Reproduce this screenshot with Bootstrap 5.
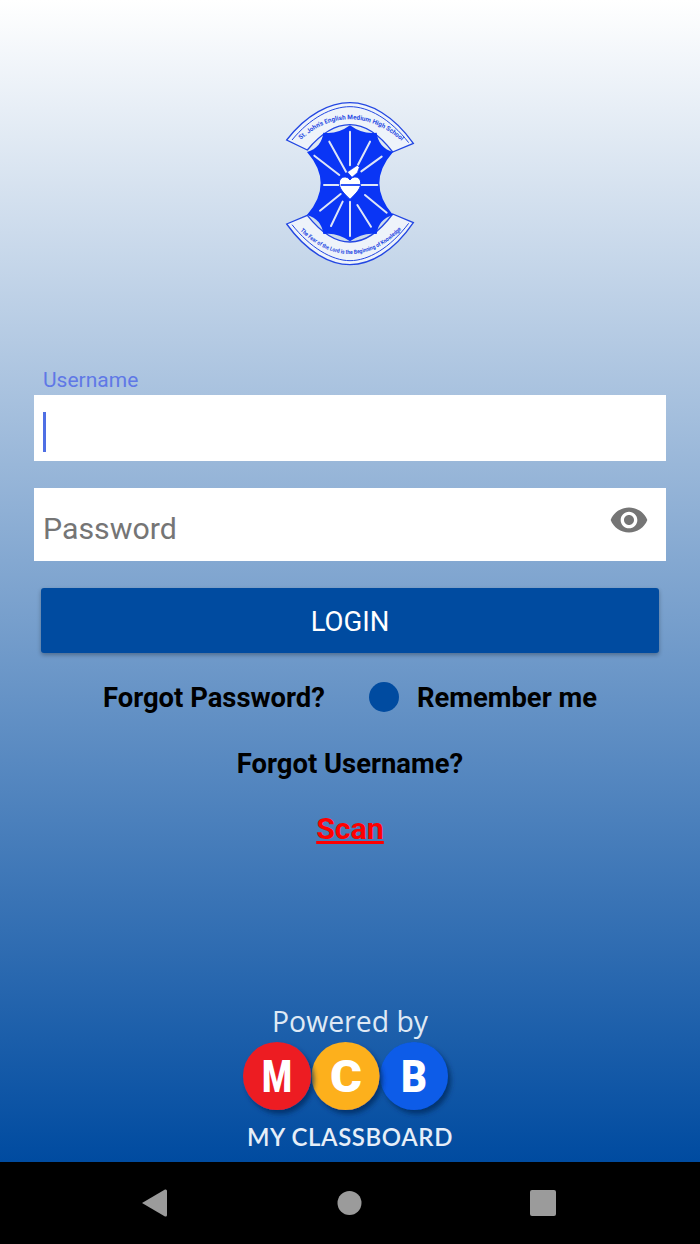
<!DOCTYPE html>
<html lang="en">
<head>
  <meta charset="UTF-8" />
  <title>Login</title>
  <meta name="viewport" content="width=device-width, initial-scale=1">
  <link href="https://cdn.jsdelivr.net/npm/bootstrap@5.3.0/dist/css/bootstrap.min.css" rel="stylesheet">
  <style>
    html, body { height: 100%; }
    body { font-family: Roboto, "Liberation Sans", sans-serif; background: #000; overflow: hidden; }
    .screen { height: 1162px; background: linear-gradient(#fff, #004ba0); }
    .crest-wrap { padding-top: 90px; height: 275px; }
    .crest-text { font-family: Roboto, "Liberation Sans", sans-serif; font-weight: 700; fill: #2347e2; }
    .form-wrap { margin-top: 92px; padding: 0 34px; }
    .user-label { color: #5f78e6; font-size: 21px; line-height: 26px; height: 28px; padding-left: 9px; margin: 0; }
    .field { position: relative; }
    .field .form-control { border: 0; border-radius: 0; font-size: 30.3px; color: #757575; padding: 0 60px 0 9px; box-shadow: none; }
    .field .form-control::placeholder { color: #757575; opacity: 1; }
    .user-input { height: 66px; }
    .pass-field { margin-top: 27px; }
    .pass-input { height: 73px; padding-top: 8px !important; }
    .fake-caret { position: absolute; left: 9px; top: 17px; width: 3px; height: 40px; background: #4f6fe4; }
    .eye-btn { position: absolute; right: 17px; top: 12px; width: 40px; height: 40px; }
    .login-btn { display: block; margin: 27px 7px 0; width: calc(100% - 14px); height: 65px; padding: 3px 0 0; background: #004ba0; border: 0; border-radius: 3px;
      font-size: 27.5px; color: #fff; box-shadow: 0 2px 4px rgba(0,0,0,.3); }
    .login-btn:hover { background: #004ba0; }
    .link-rows { font-size: 27.4px; font-weight: 700; color: #000; line-height: 30px; }
    .row-one { margin-top: 30px; gap: 44px; }
    .remember { gap: 18px; }
    .radio-dot { width: 30px; height: 30px; background: #004ba0; margin-top: -2px; }
    .row-two { margin-top: 36px; }
    .row-three { margin-top: 35px; color: #f00; font-size: 30.3px; font-weight: 700; text-decoration: underline; text-underline-offset: 2px; }
    .powered { padding-bottom: 2px; }
    .sys-nav { height: 82px; background: #000; }
    .sys-nav svg { display: block; }
  </style>
</head>
<body>

  <div class="screen d-flex flex-column">
    <!-- school crest -->
    <div class="crest-wrap d-flex justify-content-center">
      <svg width="160" height="185" viewBox="0 0 480 555">
        <defs>
          <path id="arcTop" d="M90 152 C140 105 190 88 240 88 C290 88 345 108 398 156" />
          <path id="arcBot" d="M88 420 C140 470 190 492 240 492 C290 492 345 470 398 414" />
        </defs>
        <g fill="#eef3fa" stroke="#2347e2" stroke-width="4">
          <path d="M50 150 C110 72 180 38 240 38 C300 38 370 76 430 160 L368 186 C325 130 280 104 240 104 C200 104 155 128 112 180 Z" />
          <path d="M50 402 L112 376 C155 430 200 456 240 456 C280 456 325 430 368 372 L430 398 C370 486 300 524 240 524 C180 524 110 486 50 402 Z" />
        </g>
        <g fill="none" stroke="#2347e2" stroke-width="3">
          <path d="M66 150 C120 84 185 50 240 50 C295 50 360 86 416 158" />
          <path d="M66 404 C120 472 185 512 240 512 C295 512 360 474 416 400" />
        </g>
        <path fill="#0a35f5" d="M240 106 Q278 134 320 128 Q325 172 369 186 Q287 280 369 375 Q325 388 320 432 Q278 426 240 454 Q202 426 160 432 Q155 388 111 375 Q193 280 111 186 Q155 172 160 128 Q202 134 240 106 Z" />
        <g stroke="#dfe6f7" stroke-width="6" stroke-linecap="round">
          <path d="M240 125 V226" />
          <path d="M300 155 L264 224" />
          <path d="M335 200 L274 244" />
          <path d="M178 155 L228 245" />
          <path d="M133 197 L208 255" />
          <path d="M162 285 H322" />
          <path d="M212 312 L150 362" />
          <path d="M218 335 L183 408" />
          <path d="M240 335 V438" />
          <path d="M262 345 L303 410" />
          <path d="M285 315 L350 368" />
        </g>
        <path fill="#fff" stroke="#0a35f5" stroke-width="3" d="M240 328 C222 310 206 296 208 276 C210 258 232 256 240 270 C248 256 270 258 272 276 C274 296 258 310 240 328 Z" />
        <path fill="#fff" stroke="#0a35f5" stroke-width="2" d="M232 246 L262 226 L268 232 L262 248 L246 262 Z" />
        <path stroke="#0a35f5" stroke-width="5" d="M212 285 H270" />
        <text class="crest-text" font-size="19"><textPath href="#arcTop" textLength="335" lengthAdjust="spacing" startOffset="1%">St. John's English Medium High School</textPath></text>
        <text class="crest-text" font-size="17"><textPath href="#arcBot" textLength="345" lengthAdjust="spacingAndGlyphs" startOffset="1%">The Fear of the Lord is the Beginning of Knowledge</textPath></text>
      </svg>
    </div>

    <!-- login form -->
    <div class="form-wrap">
      <label class="user-label d-block" for="user">Username</label>
      <div class="field">
        <input id="user" class="form-control user-input" type="text">
        <span class="fake-caret"></span>
      </div>
      <div class="field pass-field">
        <input class="form-control pass-input" type="password" placeholder="Password">
        <svg class="eye-btn" viewBox="0 0 24 24" fill="#757575"><path d="M12 4.5C7 4.5 2.73 7.61 1 12c1.73 4.39 6 7.5 11 7.5s9.27-3.11 11-7.5c-1.73-4.39-6-7.5-11-7.5zM12 17c-2.76 0-5-2.24-5-5s2.24-5 5-5 5 2.24 5 5-2.24 5-5 5zm0-8c-1.66 0-3 1.34-3 3s1.34 3 3 3 3-1.34 3-3-1.34-3-3-3z"/></svg>
      </div>
      <button class="btn login-btn text-white" type="button">LOGIN</button>
    </div>

    <div class="link-rows text-center">
      <div class="row-one d-flex justify-content-center align-items-center">
        <span>Forgot Password?</span>
        <span class="remember d-flex align-items-center">
          <span class="radio-dot rounded-circle d-block"></span>
          <span>Remember me</span>
        </span>
      </div>
      <div class="row-two">Forgot Username?</div>
      <div class="row-three">Scan</div>
    </div>

    <!-- powered by logo -->
    <div class="powered mt-auto d-flex justify-content-center">
      <svg width="260" height="160" viewBox="0 0 260 160">
        <defs>
          <filter id="dropShade" x="-30%" y="-30%" width="170%" height="170%">
            <feDropShadow dx="3" dy="4" stdDeviation="2.5" flood-color="#002a60" flood-opacity=".8" />
          </filter>
        </defs>
        <text x="130" y="32" text-anchor="middle" font-family="'Open Sans', sans-serif" font-size="28.400" fill="#dfe9f5">Powered by</text>
        <circle cx="194" cy="76" r="34" fill="#0a5be8" filter="url(#dropShade)" />
        <circle cx="125.500" cy="76" r="34" fill="#fdb01c" filter="url(#dropShade)" />
        <circle cx="57" cy="76" r="34" fill="#ed1c24" filter="url(#dropShade)" />
        <g font-family="Roboto, sans-serif" font-weight="900" font-size="44" fill="#fff" text-anchor="middle">
          <text x="57" y="92" textLength="30" lengthAdjust="spacingAndGlyphs">M</text>
          <text x="126" y="92" textLength="32" lengthAdjust="spacingAndGlyphs">C</text>
          <text x="194" y="92" textLength="26" lengthAdjust="spacingAndGlyphs">B</text>
        </g>
        <text x="130" y="146" text-anchor="middle" font-family="Lato, sans-serif" font-weight="600" font-size="24" letter-spacing=".6" fill="#e6eef8">MY CLASSBOARD</text>
      </svg>
    </div>
  </div>

  <!-- android nav bar -->
  <div class="sys-nav d-flex justify-content-center">
    <svg width="700" height="82" viewBox="0 0 700 82">
      <g fill="#9b9b9b">
        <path d="M142 41 L165 27.500 Q167 27 167 29 V53 Q167 55 165 54.500 Z" />
        <circle cx="349.500" cy="41" r="12" />
        <rect x="530" y="28" width="26" height="26" rx="2" />
      </g>
    </svg>
  </div>

  <script src="https://cdn.jsdelivr.net/npm/bootstrap@5.3.0/dist/js/bootstrap.bundle.min.js"></script>
</body>
</html>
